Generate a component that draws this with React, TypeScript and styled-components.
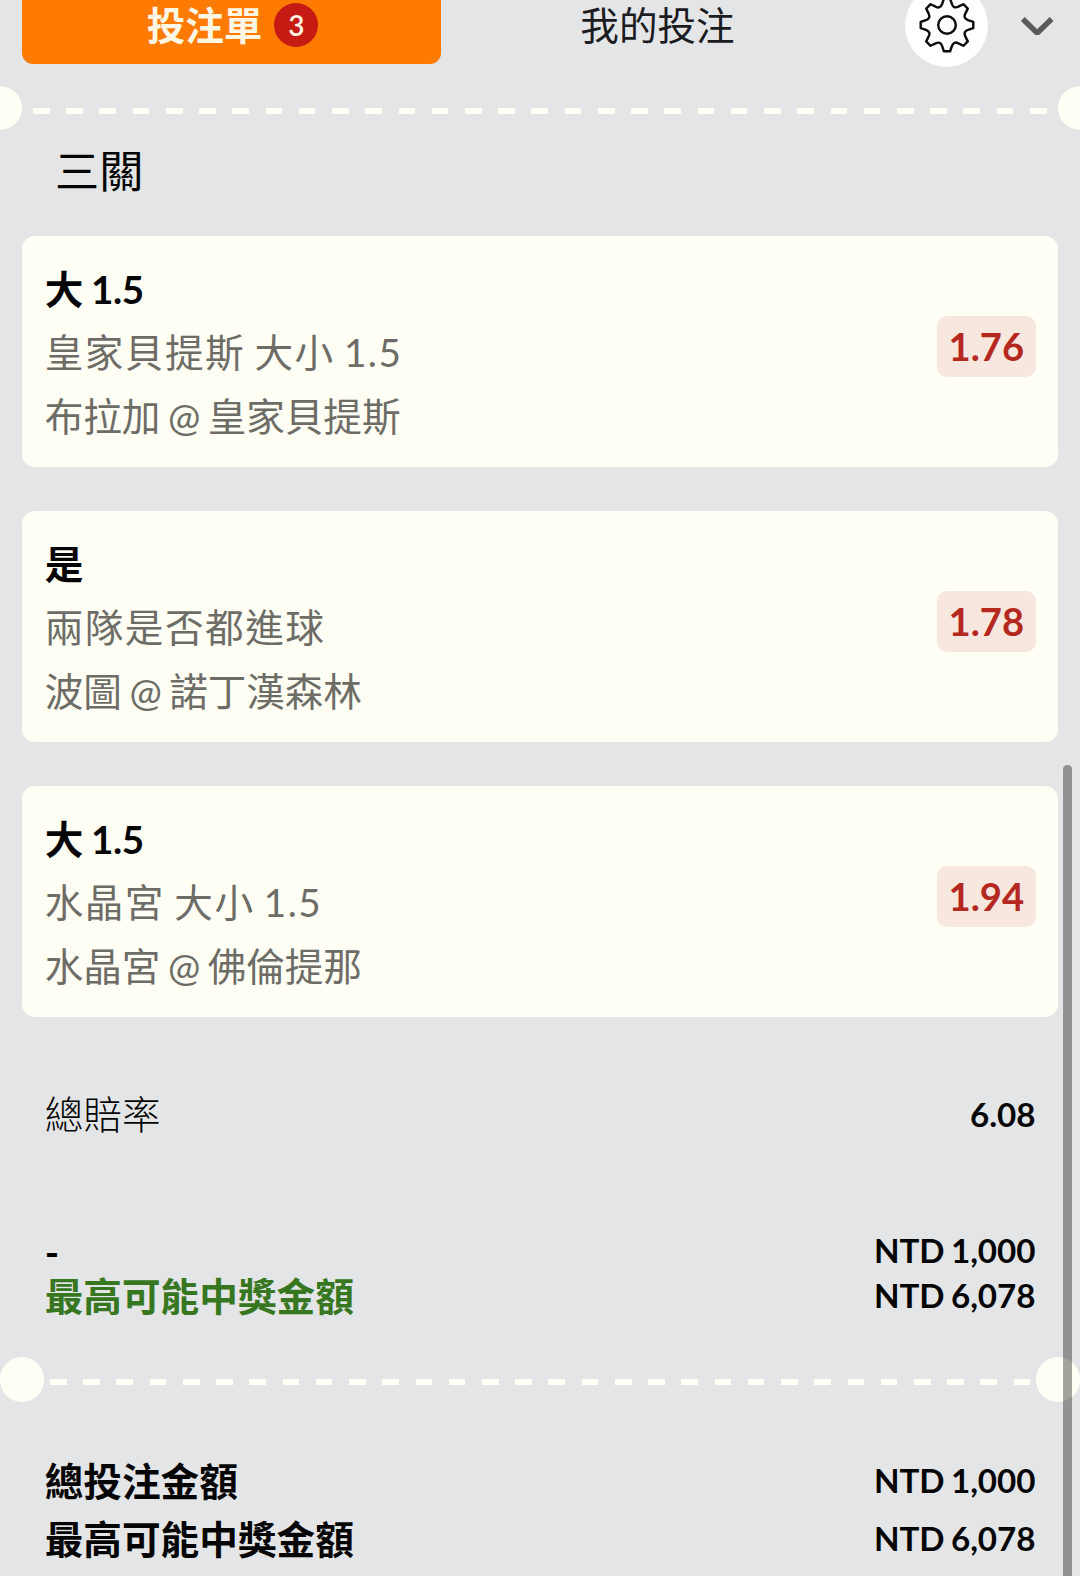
import React from "react";
import styled, { createGlobalStyle } from "styled-components";

const GlobalStyle = createGlobalStyle`
  * { box-sizing: border-box; }
  html, body { margin: 0; background: #e4e5e7; overflow: hidden; }
`;

const Page = styled.main`
  position: relative;
  width: 1080px;
  height: 1576px;
  overflow: hidden;
  display: flex;
  flex-direction: column;
  background: #e4e5e7;
  color: #050505;
  font-family: Lato, "Noto Sans CJK TC", sans-serif;
  font-size: 38.65px;
`;

const Header = styled.header`
  display: flex;
  height: 63.5px;
  padding-left: 22px;
  flex-shrink: 0;
`;

const Tab = styled.button<{ $active?: boolean }>`
  display: flex;
  align-items: center;
  justify-content: center;
  gap: 12px;
  width: ${(p) => (p.$active ? 419 : 433)}px;
  height: 63.5px;
  padding: ${(p) => (p.$active ? "0 0 13.5px 2px" : "0 0 13.5px 0")};
  border: 0;
  border-radius: 0 0 11px 11px;
  background: ${(p) => (p.$active ? "#ff7a00" : "transparent")};
  color: ${(p) => (p.$active ? "#fff6e4" : "#1b1c1f")};
  font-family: inherit;
  font-size: 38.6px;
  font-weight: ${(p) => (p.$active ? 600 : 400)};
  line-height: 50px;
`;

const Count = styled.span`
  display: flex;
  align-items: center;
  justify-content: center;
  width: 44px;
  height: 44px;
  border-radius: 50%;
  background: #c61b12;
  font-size: 28px;
  font-weight: 600;
  line-height: 44px;
`;

const SettingsButton = styled.button`
  display: flex;
  align-items: center;
  justify-content: center;
  width: 83px;
  height: 83px;
  margin: -16.5px 0 0 31px;
  padding: 0;
  border: 0;
  border-radius: 50%;
  background: #fff;
  flex-shrink: 0;
`;

const CollapseButton = styled.button`
  display: flex;
  width: 34px;
  height: 20px;
  margin: 16px 0 0 32px;
  padding: 0;
  border: 0;
  background: none;
  flex-shrink: 0;
`;

const Divider = styled.div<{ $inset?: boolean }>`
  display: flex;
  align-items: center;
  justify-content: space-between;
  height: 44.3px;
  margin: ${(p) => (p.$inset ? "40.7px 0 0" : "22.6px -22.2px 0")};
  flex-shrink: 0;
`;

const Notch = styled.span`
  width: 44.3px;
  height: 44.3px;
  border-radius: 50%;
  background: #fffff5;
`;

const Dashes = styled.span<{ $width: number }>`
  width: ${(p) => p.$width}px;
  height: 6px;
  margin-top: 5px;
  background: repeating-linear-gradient(to right, #fffff5 0 16.6px, transparent 16.6px 33.23px);
`;

const Heading = styled.h2`
  margin: 13.4px 0 0 55px;
  height: 54px;
  font-size: 44.2px;
  font-weight: 400;
  line-height: 54px;
`;

const Cards = styled.section`
  display: flex;
  flex-direction: column;
  gap: 44px;
  padding: 0 22px;
  margin-top: 37.8px;
`;

const Card = styled.article`
  display: flex;
  align-items: center;
  justify-content: space-between;
  height: 231px;
  padding: 0 22.3px 0 22.7px;
  border-radius: 13px;
  background: #fffff5;
`;

const Lines = styled.div`
  display: flex;
  flex-direction: column;
  padding-top: 4px;
`;

const Pick = styled.strong`
  height: 63.5px;
  font-weight: 700;
  line-height: 63.5px;
  word-spacing: -0.6px;
  letter-spacing: -0.5px;
`;

const Detail = styled.span<{ $spaced?: boolean }>`
  height: 63.5px;
  color: #6d6c66;
  line-height: 63.5px;
  letter-spacing: ${(p) => (p.$spaced ? 1.45 : -0.12)}px;
  word-spacing: ${(p) => (p.$spaced ? -2 : -2.1)}px;
`;

const Odds = styled.span`
  display: flex;
  align-items: center;
  justify-content: center;
  width: 98.7px;
  height: 60.6px;
  margin-bottom: 9px;
  padding-bottom: 2px;
  border-radius: 10px;
  background: #f7e7de;
  color: #b5281f;
  font-size: 38.2px;
  font-weight: 700;
`;

const Row = styled.div<{ $top: number; $height: number }>`
  display: flex;
  align-items: center;
  justify-content: space-between;
  height: ${(p) => p.$height}px;
  margin-top: ${(p) => p.$top}px;
  padding: 0 44.7px;
  flex-shrink: 0;
  line-height: ${(p) => p.$height}px;
`;

const Label = styled.span<{ $weight?: number; $green?: boolean; $drop?: number }>`
  padding-top: ${(p) => p.$drop ?? 0}px;
  font-weight: ${(p) => p.$weight ?? 700};
  color: ${(p) => (p.$green ? "#36771f" : "inherit")};
`;

const Amount = styled.span<{ $lift?: number }>`
  padding-bottom: ${(p) => p.$lift ?? 0}px;
  font-size: 33.2px;
  font-weight: 700;
  letter-spacing: -0.1px;
  word-spacing: -1.4px;
`;

const ScrollThumb = styled.span`
  position: absolute;
  top: 764.5px;
  right: 8.4px;
  width: 8.4px;
  height: 830px;
  border-radius: 4.2px;
  background: rgba(0, 0, 0, 0.36);
`;

const bets = [
  { pick: "大 1.5", market: "皇家貝提斯 大小 1.5", match: "布拉加 @ 皇家貝提斯", odds: "1.76" },
  { pick: "是", market: "兩隊是否都進球", match: "波圖 @ 諾丁漢森林", odds: "1.78" },
  { pick: "大 1.5", market: "水晶宮 大小 1.5", match: "水晶宮 @ 佛倫提那", odds: "1.94" },
];

function gearPath() {
  const at = (x: number, y: number, turn: number) => {
    const a = (turn * Math.PI) / 4;
    const px = x * Math.cos(a) - y * Math.sin(a);
    const py = x * Math.sin(a) + y * Math.cos(a);
    return `${px.toFixed(2)} ${py.toFixed(2)}`;
  };
  let d = `M${at(-4.9, -21, 0)}`;
  for (let i = 0; i < 8; i++) {
    d += `L${at(-3.1, -26.3, i)}L${at(3.1, -26.3, i)}L${at(4.9, -21, i)}`;
    d += `Q${at(6.4, -16.2, i)} ${at(-4.9, -21, i + 1)}`;
  }
  return d + "Z";
}

function GearIcon() {
  return (
    <svg width="58" height="58" viewBox="-29 -29 58 58" fill="none" stroke="#0b0b0b" strokeWidth="2.4" strokeLinejoin="round">
      <path d={gearPath()} />
      <circle r="8.8" />
    </svg>
  );
}

export default function App() {
  return (
    <>
      <GlobalStyle />
      <Page>
        <Header>
          <Tab $active>
            投注單<Count>3</Count>
          </Tab>
          <Tab>我的投注</Tab>
          <SettingsButton aria-label="設定">
            <GearIcon />
          </SettingsButton>
          <CollapseButton aria-label="收合">
            <svg width="34" height="20" viewBox="0 0 34 20" fill="none" stroke="#5a5b5d" strokeWidth="5.4" strokeLinejoin="bevel">
              <path d="M2.8 3L17.2 17L31.6 3" />
            </svg>
          </CollapseButton>
        </Header>
        <Divider>
          <Notch />
          <Dashes $width={1013.6} />
          <Notch />
        </Divider>
        <Heading>三關</Heading>
        <Cards>
          {bets.map((b, i) => (
            <Card key={i}>
              <Lines>
                <Pick>{b.pick}</Pick>
                <Detail $spaced>{b.market}</Detail>
                <Detail>{b.match}</Detail>
              </Lines>
              <Odds>{b.odds}</Odds>
            </Card>
          ))}
        </Cards>
        <Row $top={69} $height={56}>
          <Label $weight={300}>總賠率</Label>
          <Amount>6.08</Amount>
        </Row>
        <Row $top={87} $height={44}>
          <Label $drop={3}>-</Label>
          <Amount $lift={2}>NTD 1,000</Amount>
        </Row>
        <Row $top={0} $height={44}>
          <Label $green $drop={3}>最高可能中獎金額</Label>
          <Amount>NTD 6,078</Amount>
        </Row>
        <Divider $inset>
          <Notch />
          <Dashes $width={980.2} />
          <Notch />
        </Divider>
        <Row $top={50} $height={58}>
          <Label>總投注金額</Label>
          <Amount $lift={2}>NTD 1,000</Amount>
        </Row>
        <Row $top={0} $height={58}>
          <Label>最高可能中獎金額</Label>
          <Amount $lift={2}>NTD 6,078</Amount>
        </Row>
        <ScrollThumb />
      </Page>
    </>
  );
}
